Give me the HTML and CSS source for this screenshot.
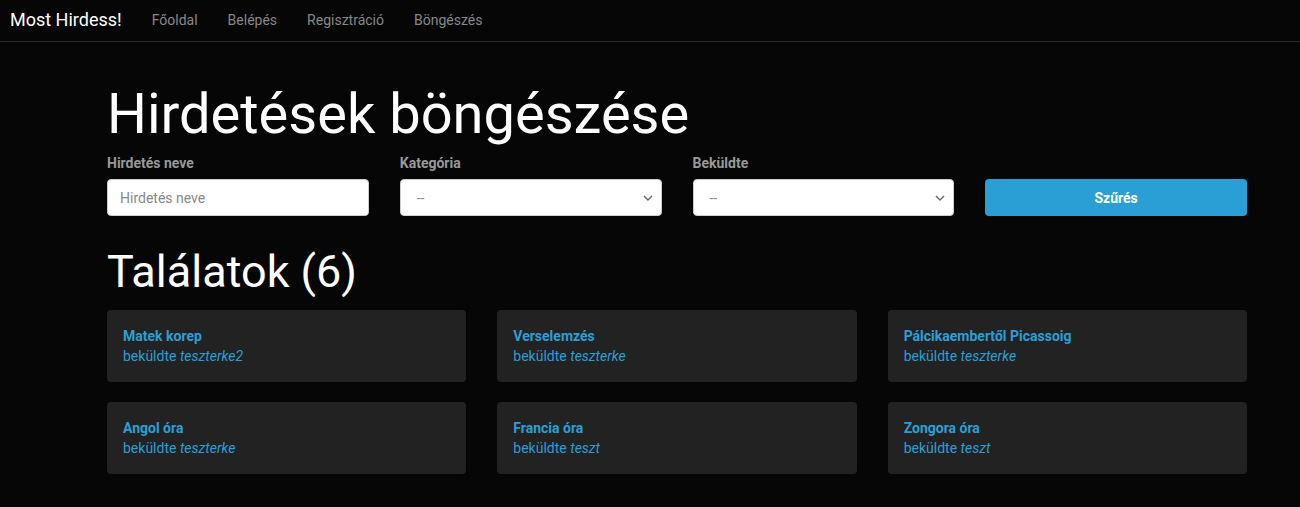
FILE: index.html
```html
<!DOCTYPE html>
<html lang="hu">
<head>
<meta charset="utf-8">
<title>Most Hirdess!</title>
<link rel="stylesheet" href="styles.css">
</head>
<body>
<nav class="navbar">
  <a class="brand" href="#">Most Hirdess!</a>
  <ul class="nav">
    <li><a href="#">Főoldal</a></li>
    <li><a href="#">Belépés</a></li>
    <li><a href="#">Regisztráció</a></li>
    <li><a href="#">Böngészés</a></li>
  </ul>
</nav>
<main class="container">
  <h1 class="title">Hirdetések böngészése</h1>
  <form class="filters">
    <div class="field">
      <label class="label">Hirdetés neve</label>
      <input class="control" type="text" placeholder="Hirdetés neve">
    </div>
    <div class="field">
      <label class="label">Kategória</label>
      <div class="select"><span>--</span><svg width="10" height="6" viewBox="0 0 10 6"><path d="M1 1l4 4 4-4" fill="none" stroke="#666" stroke-width="1.4"/></svg></div>
    </div>
    <div class="field">
      <label class="label">Beküldte</label>
      <div class="select"><span>--</span><svg width="10" height="6" viewBox="0 0 10 6"><path d="M1 1l4 4 4-4" fill="none" stroke="#666" stroke-width="1.4"/></svg></div>
    </div>
    <div class="field">
      <span class="label">&nbsp;</span>
      <button class="btn" type="button">Szűrés</button>
    </div>
  </form>
  <h2 class="results">Találatok (6)</h2>
  <div class="cards">
    <div class="card"><div class="card-title">Matek korep</div><div class="card-sub">beküldte <i>teszterke2</i></div></div>
    <div class="card"><div class="card-title">Verselemzés</div><div class="card-sub">beküldte <i>teszterke</i></div></div>
    <div class="card"><div class="card-title">Pálcikaembertől Picassoig</div><div class="card-sub">beküldte <i>teszterke</i></div></div>
    <div class="card"><div class="card-title">Angol óra</div><div class="card-sub">beküldte <i>teszterke</i></div></div>
    <div class="card"><div class="card-title">Francia óra</div><div class="card-sub">beküldte <i>teszt</i></div></div>
    <div class="card"><div class="card-title">Zongora óra</div><div class="card-sub">beküldte <i>teszt</i></div></div>
  </div>
</main>
</body>
</html>
```

FILE: styles.css
```css
* { box-sizing: border-box; }
body {
  margin: 0;
  background: #060606;
  color: #fff;
  font-family: Roboto, "Liberation Sans", sans-serif;
  font-size: 14px;
}
.navbar {
  display: flex;
  align-items: center;
  height: 42px;
  border-bottom: 1px solid #282828;
  padding: 0 10px 2px;
}
.brand {
  color: #fff;
  font-size: 18px;
  text-decoration: none;
  margin-right: 30px;
}
.nav {
  display: flex;
  list-style: none;
  margin: 0;
  padding: 0;
  gap: 30px;
}
.nav a {
  color: #888;
  text-decoration: none;
  font-size: 14px;
}
.container {
  padding: 0 53px 0 107px;
}
.title {
  font-size: 56px;
  font-weight: 400;
  margin: 38px 0 0;
  line-height: 68px;
}
.filters {
  display: grid;
  grid-template-columns: repeat(4, 1fr);
  column-gap: 31px;
  margin-top: 6px;
}
.field { display: flex; flex-direction: column; }
.label {
  color: #999;
  font-weight: 700;
  font-size: 14px;
  line-height: 18px;
  margin-bottom: 7px;
}
.control, .select {
  height: 37px;
  border: 1px solid #ccc;
  border-radius: 4px;
  background: #fff;
  font-family: inherit;
  font-size: 14px;
  padding: 0 12px;
  color: #555;
}
.control::placeholder { color: #888; }
.select {
  display: flex;
  align-items: center;
  justify-content: space-between;
  padding: 0 8px 0 16px;
  color: #888;
}
.btn {
  height: 37px;
  border: 0;
  border-radius: 4px;
  background: #2a9fd6;
  color: #fff;
  font-family: inherit;
  font-weight: 700;
  font-size: 14px;
}
.results {
  font-size: 45px;
  font-weight: 400;
  margin: 26px 0 0;
  line-height: 60px;
}
.cards {
  display: grid;
  grid-template-columns: repeat(3, 1fr);
  column-gap: 31px;
  row-gap: 20px;
  margin-top: 8px;
}
.card {
  background: #222;
  border-radius: 4px;
  height: 72px;
  padding: 16px 16px;
  color: #2a9fd6;
  line-height: 20px;
}
.card-title { font-weight: 700; }
```
